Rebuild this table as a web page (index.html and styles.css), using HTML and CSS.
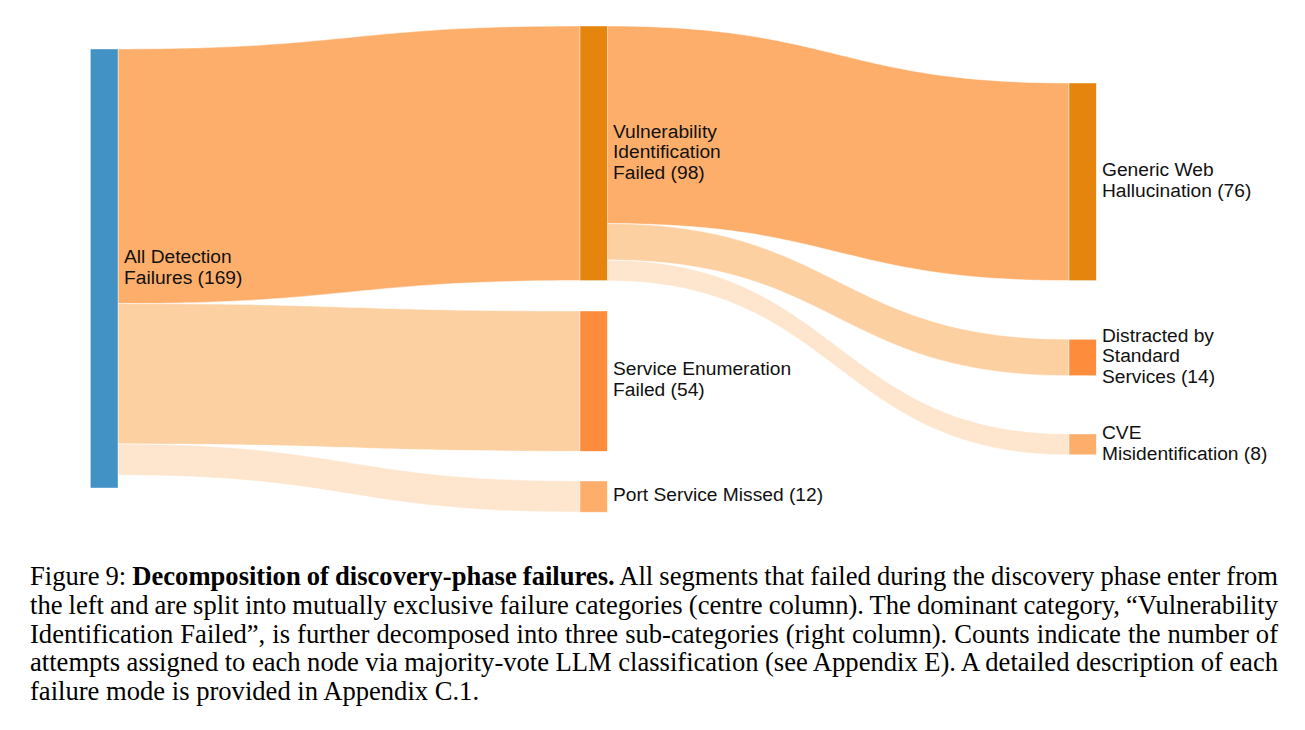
FILE: index.html
```html
<!DOCTYPE html>
<html lang="en">
<head>
<meta charset="utf-8">
<title>Figure 9: Decomposition of discovery-phase failures</title>
<link rel="stylesheet" href="styles.css">
</head>
<body>
<figure class="figure">
  <svg class="sankey" width="1305" height="540" viewBox="0 0 1305 540" xmlns="http://www.w3.org/2000/svg">
    <g class="links">
      <path class="link l-mid" d="M118,49 C349,49 349,26 580,26 L580,280.6 C349,280.6 349,303.6 118,303.6 Z"/>
      <path class="link l-light" d="M118,303.6 C349,303.6 349,311 580,311 L580,451.3 C349,451.3 349,444 118,444 Z"/>
      <path class="link l-pale" d="M118,444 C349,444 349,481 580,481 L580,512.2 C349,512.2 349,475.2 118,475.2 Z"/>
      <path class="link l-mid" d="M607,26 C838,26 838,83 1069,83 L1069,280.6 C838,280.6 838,223.6 607,223.6 Z"/>
      <path class="link l-light" d="M607,223.6 C838,223.6 838,339.3 1069,339.3 L1069,375.7 C838,375.7 838,260 607,260 Z"/>
      <path class="link l-pale" d="M607,260 C838,260 838,434 1069,434 L1069,454.8 C838,454.8 838,280.8 607,280.8 Z"/>
    </g>
    <g class="nodes">
      <rect class="node n-blue" x="90.3" y="49" width="27.7" height="439"/>
      <rect class="node n-dark" x="580" y="26" width="27.3" height="254.6"/>
      <rect class="node n-med" x="580" y="311" width="27.3" height="140.3"/>
      <rect class="node n-soft" x="580" y="481" width="27.3" height="31.2"/>
      <rect class="node n-dark" x="1069" y="83" width="27.3" height="197.6"/>
      <rect class="node n-med" x="1069" y="339.3" width="27.3" height="36.4"/>
      <rect class="node n-soft" x="1069" y="434" width="27.3" height="20.8"/>
    </g>
    <g class="labels">
      <text class="lbl" x="124" y="263">All Detection</text>
      <text class="lbl" x="124" y="283.8">Failures (169)</text>

      <text class="lbl" x="613" y="137.6">Vulnerability</text>
      <text class="lbl" x="613" y="158.1">Identification</text>
      <text class="lbl" x="613" y="178.6">Failed (98)</text>

      <text class="lbl" x="613" y="375.4">Service Enumeration</text>
      <text class="lbl" x="613" y="395.9">Failed (54)</text>

      <text class="lbl" x="613" y="501">Port Service Missed (12)</text>

      <text class="lbl" x="1102" y="176.3">Generic Web</text>
      <text class="lbl" x="1102" y="196.8">Hallucination (76)</text>

      <text class="lbl" x="1102" y="341.7">Distracted by</text>
      <text class="lbl" x="1102" y="362.2">Standard</text>
      <text class="lbl" x="1102" y="382.7">Services (14)</text>

      <text class="lbl" x="1102" y="439">CVE</text>
      <text class="lbl" x="1102" y="459.5">Misidentification (8)</text>
    </g>
  </svg>
  <figcaption class="caption">
    <span class="line">Figure 9: <b>Decomposition of discovery-phase failures.</b> All segments that failed during the discovery phase enter from</span>
    <span class="line">the left and are split into mutually exclusive failure categories (centre column). The dominant category, “Vulnerability</span>
    <span class="line">Identification Failed”, is further decomposed into three sub-categories (right column). Counts indicate the number of</span>
    <span class="line">attempts assigned to each node via majority-vote LLM classification (see Appendix E). A detailed description of each</span>
    <span class="line last">failure mode is provided in Appendix C.1.</span>
  </figcaption>
</figure>
</body>
</html>
```

FILE: styles.css
```css
html, body {
  margin: 0;
  padding: 0;
  background: #ffffff;
}

.figure {
  margin: 0;
  width: 1305px;
}

.sankey {
  display: block;
}

.link {
  stroke: #ffffff;
  stroke-opacity: 0.6;
  stroke-width: 0.8;
}

.l-mid { fill: #fdae6b; }
.l-light { fill: #fdd0a2; }
.l-pale { fill: #fee6ce; }

.node {
  stroke: #ffffff;
  stroke-opacity: 0.7;
  stroke-width: 0.6;
}

.n-blue { fill: #4292c6; }
.n-dark { fill: #e6850e; }
.n-med { fill: #fd8d3c; }
.n-soft { fill: #fdae6b; }

.lbl {
  font-family: "Liberation Sans", Arial, sans-serif;
  font-size: 19.2px;
  fill: #111111;
}

.caption {
  margin: 22px 0 0 30px;
  width: 1248px;
  font-family: "Liberation Serif", "Times New Roman", serif;
  font-size: 26.6px;
  line-height: 28.75px;
  color: #000000;
}

.line {
  display: block;
  text-align: justify;
  text-align-last: justify;
  word-spacing: -3.4px;
}

.line.last {
  text-align: left;
  text-align-last: left;
  word-spacing: 0;
}
```
